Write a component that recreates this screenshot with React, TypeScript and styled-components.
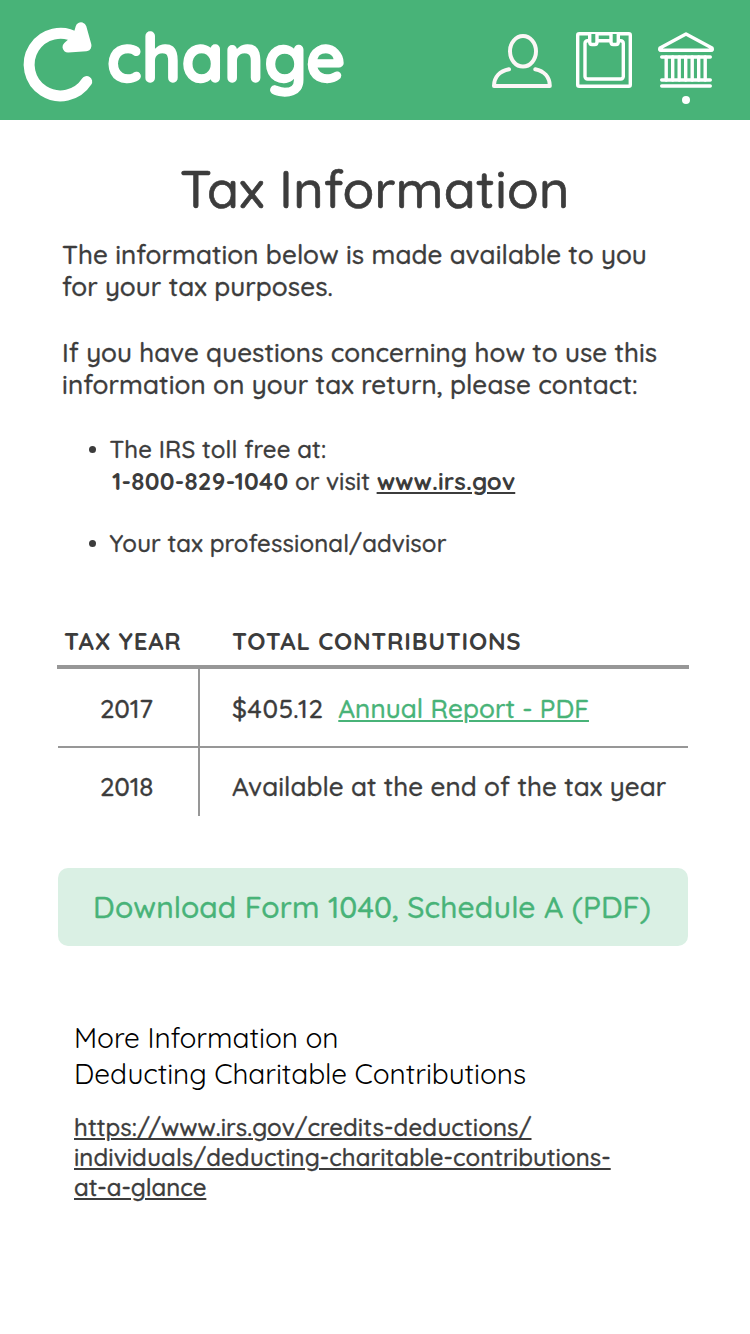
import React from "react";
import styled, { createGlobalStyle } from "styled-components";

const green = "#48b378";
const ink = "#3c3c3c";
const rule = "#979797";

const GlobalStyle = createGlobalStyle`
  * { box-sizing: border-box; }
  html, body { margin: 0; padding: 0; background: #fff; }
  body {
    font-family: Quicksand, Lato, "Liberation Sans", sans-serif;
    font-weight: 500;
    color: ${ink};
    -webkit-text-stroke: 0.35px currentColor;
  }
`;

const Page = styled.div`
  width: 750px;
  min-height: 1334px;
  background: #fff;
  overflow: hidden;
`;

const Header = styled.header`
  display: flex;
  align-items: flex-start;
  height: 120px;
  background: ${green};
  color: #fff;
`;

const LogoMark = styled.svg`
  flex: none;
  width: 76px;
  height: 84px;
  margin: 20px 0 0 20px;
`;

const Wordmark = styled.div`
  width: 394px;
  padding-left: 10.5px;
  font-size: 67.6px;
  font-weight: 700;
  line-height: 114px;
  white-space: nowrap;
  -webkit-text-stroke: 1.4px #fff;
`;

const NavIcon = styled.svg`
  flex: none;
  width: 64px;
  height: 80px;
  margin-top: 28px;
  & + & { margin-left: 18px; }
`;

const Line = styled.span<{ $track?: number }>`
  display: block;
  white-space: pre;
  letter-spacing: ${(p) => p.$track ?? 0.09}px;
`;

const Title = styled.h1`
  margin: 49px 0 0;
  padding-left: 180px;
  font-size: 52px;
  font-weight: 500;
  line-height: 40px;
  -webkit-text-stroke-width: 0.7px;
`;

const Copy = styled.p<{ $top: number }>`
  margin: ${(p) => p.$top}px 0 0 62px;
  font-size: 26px;
  line-height: 32px;
`;

const Bullets = styled.ul`
  margin: 32px 0 0 88px;
  padding: 0;
  list-style: none;
  font-size: 24px;
  line-height: 32px;
`;

const Bullet = styled.li`
  display: flex;
  & + & { margin-top: 30px; }
  &::before {
    content: "";
    flex: none;
    width: 7px;
    height: 7px;
    margin: 13px 14px 0 0.5px;
    border-radius: 50%;
    background: ${ink};
  }
`;

const Link = styled.a<{ $color?: string; $bold?: boolean }>`
  color: ${(p) => p.$color ?? ink};
  font-weight: ${(p) => (p.$bold ? 700 : 500)};
  -webkit-text-stroke: ${(p) => (p.$bold ? 0 : 0.35)}px currentColor;
  text-decoration: underline;
  text-decoration-thickness: 2px;
  text-underline-offset: 2px;
`;

const Phone = styled.strong`
  padding-left: 2.5px;
  font-weight: 700;
  letter-spacing: 0.25px;
  -webkit-text-stroke-width: 0;
`;

const Table = styled.section`
  width: 632px;
  margin: 66px 0 0 57px;
`;

const HeadRow = styled.div`
  display: grid;
  grid-template-columns: 168px 1fr;
  height: 44px;
  padding-left: 7px;
  border-bottom: 4px solid ${rule};
  font-size: 24px;
  font-weight: 700;
  line-height: 32px;
  -webkit-text-stroke-width: 0;
`;

const Row = styled.div<{ $height: number; $top: number }>`
  display: grid;
  grid-template-columns: 142px 1fr;
  height: ${(p) => p.$height}px;
  margin: 0 1px;
  font-size: 26px;
  line-height: 32px;
  & + & { border-top: 2px solid ${rule}; }
  & > * { padding-top: ${(p) => p.$top}px; }
`;

const Year = styled.div`
  padding-left: 42px;
  border-right: 2px solid ${rule};
`;

const Amount = styled.div`
  display: flex;
  padding-left: 32px;
  white-space: pre;
`;

const Download = styled.button`
  display: block;
  width: 630px;
  height: 78px;
  margin: 52px 0 0 58px;
  padding: 0 0 0 35px;
  border: 0;
  border-radius: 10px;
  background: #daf0e4;
  color: ${green};
  font: inherit;
  font-size: 30px;
  text-align: left;
  -webkit-text-stroke: 0.35px ${green};
`;

const MoreHeading = styled.h2`
  margin: 74px 0 0 74px;
  color: #000;
  font-size: 28px;
  font-weight: 400;
  line-height: 36px;
  -webkit-text-stroke-width: 0;
`;

const MoreLink = styled.p`
  margin: 20px 0 0 74px;
  font-size: 24px;
  line-height: 30px;
`;

export default function App() {
  return (
    <Page>
      <GlobalStyle />
      <Header>
        <LogoMark viewBox="20 20 76 84" fill="none" stroke="#fff" strokeWidth="11" strokeLinecap="round" strokeLinejoin="round">
          <path d="M86.7 81.6 A31.3 31.3 0 1 1 77 38" />
          <path d="M81 27.7 L86 45.8 L68 47 L78 38 Z" fill="#fff" />
        </LogoMark>
        <Wordmark>change</Wordmark>
        <NavIcon viewBox="490 28 64 80" fill="none" stroke="#fcf6f6" strokeWidth="4" strokeLinecap="round" strokeLinejoin="round">
          <ellipse cx="523" cy="51.3" rx="13" ry="15.3" />
          <path d="M509 69.2 C500 71 494 77 494 86 H549.8 C549.8 77 544 71 535.3 69.2" />
        </NavIcon>
        <NavIcon viewBox="572 28 64 80" fill="none" stroke="#fff" strokeWidth="3.4">
          <rect x="577.7" y="33.7" width="52.6" height="52.6" rx="1.5" />
          <rect x="585" y="40.7" width="38.3" height="38.3" rx="2.5" />
          <path d="M589.7 34 V42 Q589.7 44.5 592 44.5 H594.7 Q597 44.5 597 42 V34 M611 34 V42 Q611 44.5 613.3 44.5 H616 Q618.3 44.5 618.3 42 V34" fill={green} />
        </NavIcon>
        <NavIcon viewBox="654 28 64 80" fill="none" stroke="#fff" strokeWidth="3.4" strokeLinecap="round" strokeLinejoin="round">
          <path d="M686 34 L660 48 Q659 50.3 661 50.3 H711 Q713 50.3 712 48 Z" />
          <path d="M661.7 57 H710.3 M661.7 80 H710.3 M661.7 86 H710.3" />
          <path d="M666.2 57 V80 M672.7 57 V80 M679.2 57 V80 M685.7 57 V80 M692.2 57 V80 M698.7 57 V80 M705.2 57 V80" />
          <circle cx="686" cy="100" r="4" fill="#fff" stroke="none" />
        </NavIcon>
      </Header>

      <Title><Line $track={0.33}>Tax Information</Line></Title>
      <Copy $top={30}>
        <Line>The information below is made available to you</Line>
        <Line>for your tax purposes.</Line>
      </Copy>
      <Copy $top={34}>
        <Line $track={0.07}>If you have questions concerning how to use this</Line>
        <Line $track={0.13}>information on your tax return, please contact:</Line>
      </Copy>

      <Bullets>
        <Bullet>
          <div>
            <Line $track={0.12}>The IRS toll free at:</Line>
            <Line $track={0.05}><Phone>1-800-829-1040</Phone> or visit <Link $bold href="#irs">www.irs.gov</Link></Line>
          </div>
        </Bullet>
        <Bullet><Line $track={0.12}>Your tax professional/advisor</Line></Bullet>
      </Bullets>

      <Table>
        <HeadRow><Line $track={0.75}>TAX YEAR</Line><Line $track={0.75}>TOTAL CONTRIBUTIONS</Line></HeadRow>
        <Row $height={77} $top={24}>
          <Year><Line $track={-0.2}>2017</Line></Year>
          <Amount>
            <Line $track={0.7}>$405.12</Line>
            <Line>{"  "}<Link $color={green} href="#report">Annual Report - PDF</Link></Line>
          </Amount>
        </Row>
        <Row $height={70} $top={23}>
          <Year><Line $track={-0.2}>2018</Line></Year>
          <Amount><Line>Available at the end of the tax year</Line></Amount>
        </Row>
      </Table>

      <Download><Line $track={0.11}>Download Form 1040, Schedule A (PDF)</Line></Download>

      <MoreHeading>
        <Line $track={-0.05}>More Information on</Line>
        <Line $track={-0.06}>Deducting Charitable Contributions</Line>
      </MoreHeading>
      <MoreLink>
        <Link href="#deductions">
          <Line $track={0.1}>https://www.irs.gov/credits-deductions/</Line>
          <Line $track={0.07}>individuals/deducting-charitable-contributions-</Line>
          <Line $track={-0.05}>at-a-glance</Line>
        </Link>
      </MoreLink>
    </Page>
  );
}
